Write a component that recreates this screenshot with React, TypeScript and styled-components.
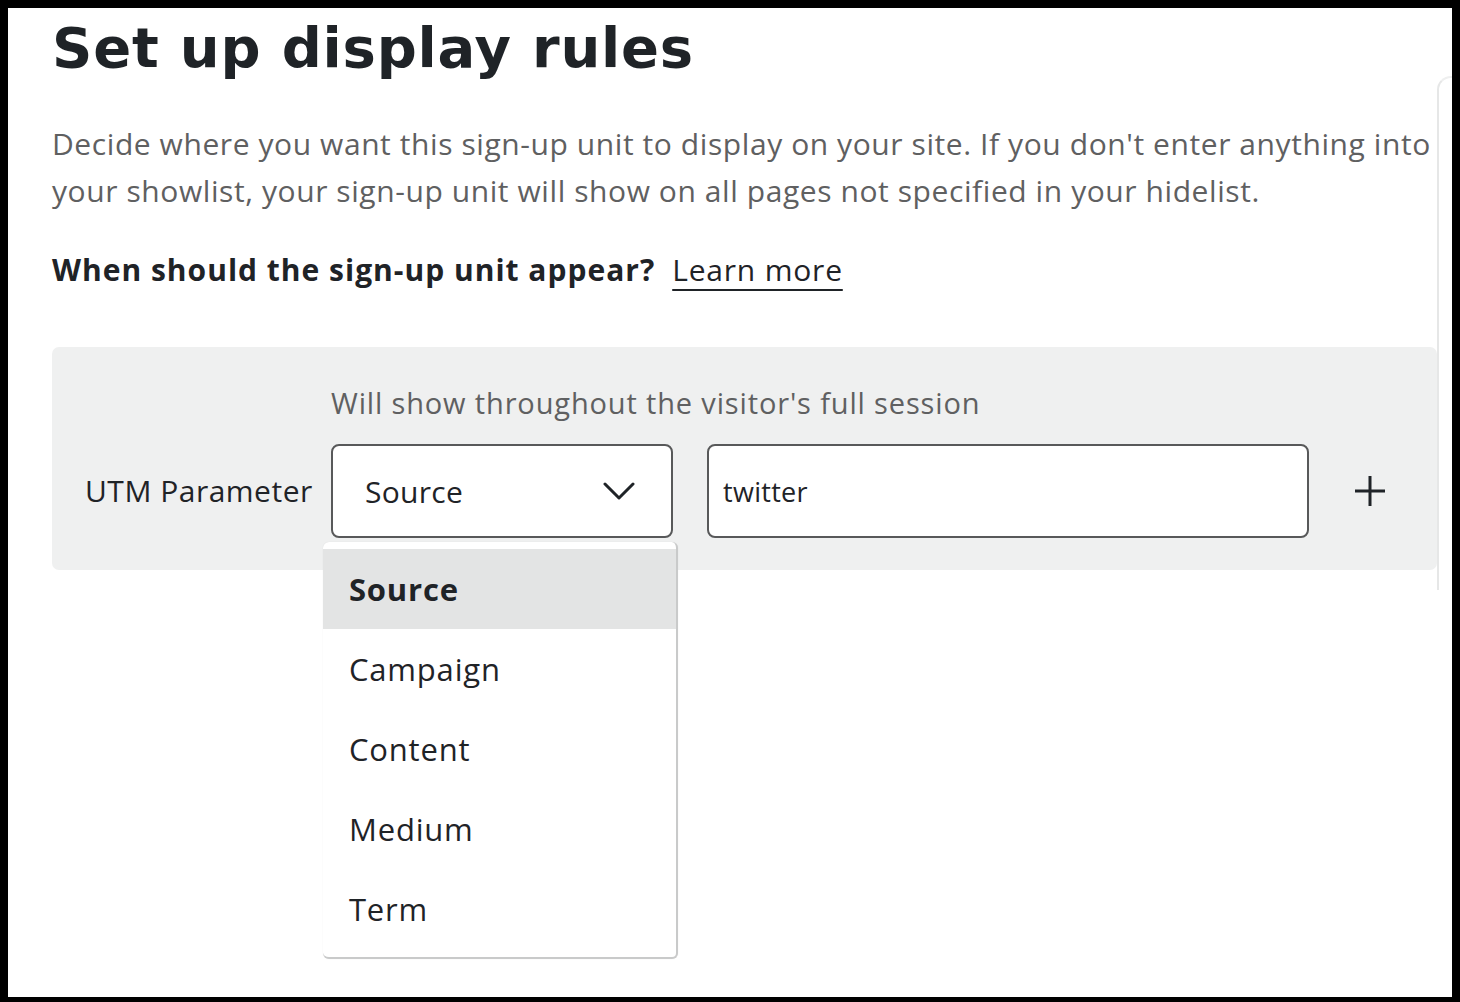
import { useState } from 'react'
import styled, { createGlobalStyle } from 'styled-components'

const GlobalStyle = createGlobalStyle`
  html, body {
    margin: 0;
    padding: 0;
    background: #000;
  }
  body {
    font-family: 'Open Sans', 'Noto Sans', sans-serif;
    -webkit-font-smoothing: antialiased;
  }
  * {
    box-sizing: border-box;
  }
`

const OPTIONS = ['Source', 'Campaign', 'Content', 'Medium', 'Term']

const Frame = styled.div`
  height: 1002px;
  border-style: solid;
  border-color: #000;
  border-width: 8px 8px 5px 8px;
  background: #fff;
  display: flex;
  overflow: hidden;
`

const Main = styled.main`
  width: 1429px;
  padding: 8px 0 0 44px;
`

const Aside = styled.aside`
  flex: 1;
  margin-top: 68px;
  height: 514px;
  border-left: 2px solid #e6e7e7;
  border-top: 2px solid #eeefef;
  border-top-left-radius: 14px;
`

const Title = styled.h1`
  margin: 0;
  font-family: 'DejaVu Sans', Inter, sans-serif;
  font-weight: 700;
  font-size: 56px;
  line-height: 64px;
  letter-spacing: 0.8px;
  color: #1f2327;
`

const Intro = styled.p`
  margin: 40px 0 0;
  font-size: 30px;
  line-height: 47px;
  letter-spacing: 0.58px;
  color: #5f6061;
`

const Question = styled.div`
  margin-top: 36px;
  display: flex;
  align-items: baseline;
  gap: 17px;
  font-size: 30px;
  line-height: 40px;
  color: #1f2327;
`

const QuestionText = styled.strong`
  font-weight: 700;
  letter-spacing: 1px;
`

const LearnMore = styled.a`
  color: #1f2327;
  letter-spacing: 0.8px;
  text-decoration: underline;
  text-decoration-thickness: 2px;
  text-underline-offset: 8px;
  cursor: pointer;
`

const RulePanel = styled.section`
  margin-top: 57px;
  background: #eff0f0;
  border-radius: 7px;
  padding: 38px 0 32px 33px;
  display: grid;
  grid-template-columns: 246px 342px 636px 1fr;
  row-gap: 23px;
  align-items: center;
`

const Hint = styled.div`
  grid-column: 2 / span 3;
  font-size: 29px;
  line-height: 36px;
  letter-spacing: 0.85px;
  color: #5f6061;
`

const Label = styled.div`
  font-size: 30px;
  line-height: 40px;
  letter-spacing: 0.5px;
  color: #1f2327;
`

const SelectWrap = styled.div`
  position: relative;
`

const SelectButton = styled.button`
  width: 342px;
  height: 94px;
  display: flex;
  align-items: center;
  justify-content: space-between;
  padding: 0 36px 0 32px;
  background: #fff;
  border: 2px solid #58595a;
  border-radius: 8px;
  font-family: inherit;
  font-size: 30px;
  letter-spacing: 0.3px;
  color: #1f2327;
  cursor: pointer;
`

const TextInput = styled.input`
  margin-left: 34px;
  width: 602px;
  height: 94px;
  padding: 0 14px;
  background: #fff;
  border: 2px solid #58595a;
  border-radius: 8px;
  font-family: inherit;
  font-size: 27px;
  letter-spacing: 0.3px;
  color: #1f2327;
  outline: none;
`

const AddButton = styled.button`
  margin-left: 44px;
  width: 34px;
  height: 34px;
  padding: 0;
  border: none;
  background: none;
  display: flex;
  align-items: center;
  justify-content: center;
  color: #1f2327;
  cursor: pointer;
`

const Menu = styled.ul`
  position: absolute;
  top: 98px;
  left: -8px;
  width: 355px;
  margin: 0;
  padding: 7px 0 8px;
  list-style: none;
  background: #fff;
  border-radius: 6px;
  border-right: 2px solid #c9caca;
  border-bottom: 2px solid #c9caca;
  box-shadow: 0 0 1px rgba(0, 0, 0, 0.12);
  z-index: 5;
`

const MenuItem = styled.li<{ $active?: boolean }>`
  height: 80px;
  display: flex;
  align-items: center;
  padding-left: 26px;
  font-size: 31px;
  letter-spacing: 0.8px;
  color: #1f2327;
  font-weight: ${(p) => (p.$active ? 700 : 400)};
  background: ${(p) => (p.$active ? '#e3e4e4' : 'transparent')};
  cursor: pointer;
`

const Chevron = () => (
  <svg width="32" height="20" viewBox="0 0 32 20" fill="none">
    <path d="M2 3l14 14L30 3" stroke="#1f2327" strokeWidth="3" strokeLinecap="round" strokeLinejoin="round" />
  </svg>
)

const Plus = () => (
  <svg width="32" height="32" viewBox="0 0 32 32" fill="none">
    <path d="M16 1v30M1 16h30" stroke="#1f2327" strokeWidth="3" />
  </svg>
)

export default function App() {
  const [value, setValue] = useState('Source')
  const [open, setOpen] = useState(true)
  const [text, setText] = useState('twitter')

  return (
    <>
      <GlobalStyle />
      <Frame>
        <Main>
          <Title>Set up display rules</Title>
          <Intro>
            Decide where you want this sign-up unit to display on your site. If you don't enter anything into your
            showlist, your sign-up unit will show on all pages not specified in your hidelist.
          </Intro>
          <Question>
            <QuestionText>When should the sign-up unit appear?</QuestionText>
            <LearnMore>Learn more</LearnMore>
          </Question>

          <RulePanel>
            <Hint>Will show throughout the visitor's full session</Hint>
            <Label>UTM Parameter</Label>
            <SelectWrap>
              <SelectButton onClick={() => setOpen((o) => !o)}>
                <span>{value}</span>
                <Chevron />
              </SelectButton>
              {open && (
                <Menu>
                  {OPTIONS.map((opt) => (
                    <MenuItem
                      key={opt}
                      $active={opt === value}
                      onClick={() => {
                        setValue(opt)
                        setOpen(false)
                      }}>
                      {opt}
                    </MenuItem>
                  ))}
                </Menu>
              )}
            </SelectWrap>
            <TextInput value={text} onChange={(e) => setText(e.target.value)} />
            <AddButton aria-label="Add rule">
              <Plus />
            </AddButton>
          </RulePanel>
        </Main>
        <Aside />
      </Frame>
    </>
  )
}
